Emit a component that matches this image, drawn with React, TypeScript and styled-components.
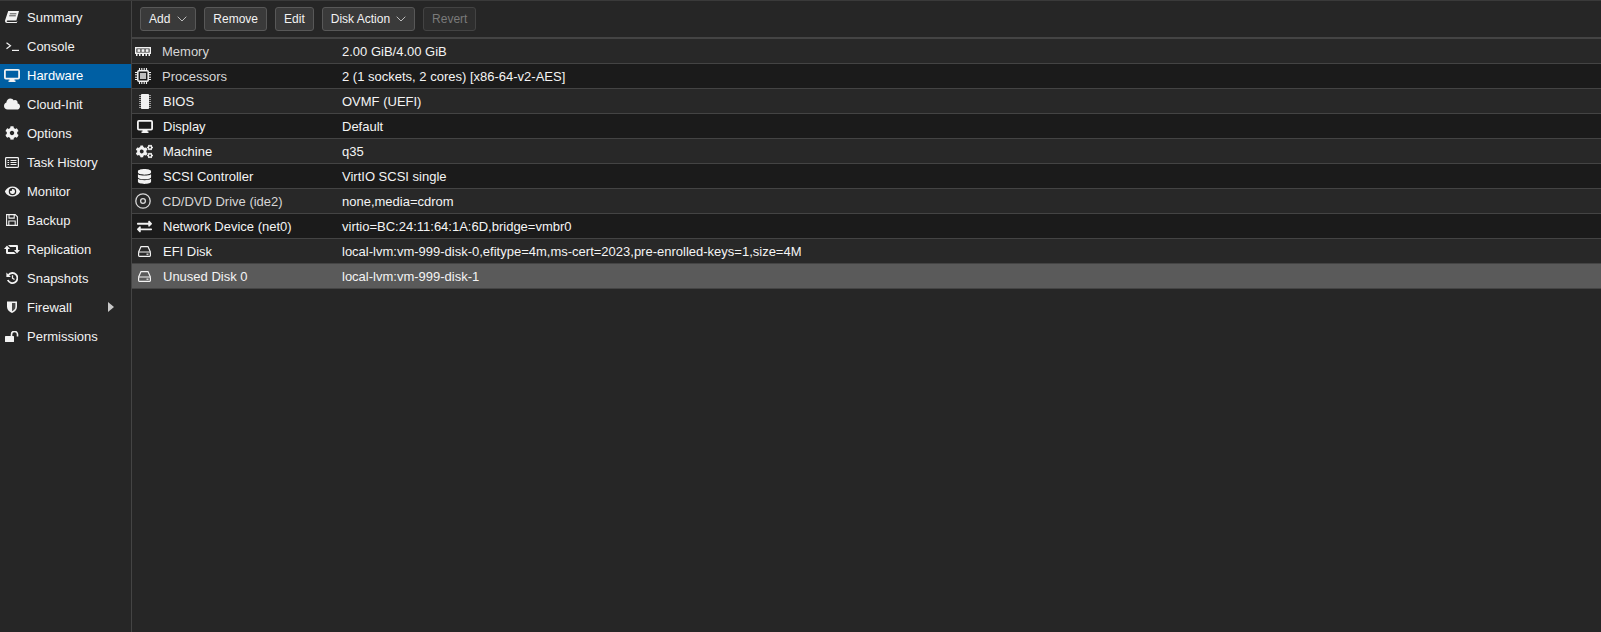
import React from "react";
import styled, { createGlobalStyle } from "styled-components";
import { FaCloud, FaCog, FaCogs, FaDatabase, FaExchangeAlt, FaEye } from "react-icons/fa";

const GlobalStyle = createGlobalStyle`
  html, body {
    margin: 0;
    height: 100%;
    background: #262626;
  }
  #root {
    height: 100%;
  }
`;

const Page = styled.div`
  display: flex;
  height: 632px;
  box-sizing: border-box;
  border-top: 1px solid #3a3a3a;
  background: #262626;
  color: #f2f2f2;
  font-family: "Liberation Sans", Arial, sans-serif;
  font-size: 13px;
  overflow: hidden;
`;

const Sidebar = styled.nav`
  width: 131px;
  flex: none;
  padding-top: 5px;
  border-right: 1px solid #444;
  display: flex;
  flex-direction: column;
  gap: 5px;
`;

const NavItem = styled.div<{ $active?: boolean }>`
  height: 24px;
  box-sizing: border-box;
  padding: 0 0 2px 4px;
  display: flex;
  align-items: center;
  background: ${(p) => (p.$active ? "#005fa3" : "transparent")};
  color: ${(p) => (p.$active ? "#fff" : "#f2f2f2")};
`;

const NavIcon = styled.span`
  width: 16px;
  margin-right: 7px;
  flex: none;
  display: flex;
  align-items: center;
  justify-content: center;
  font-size: 14px;
`;

const NavLabel = styled.span`
  flex: 1;
`;

const NavArrow = styled.span`
  width: 0;
  height: 0;
  margin-right: 17px;
  border-left: 6px solid #c8c8c8;
  border-top: 5px solid transparent;
  border-bottom: 5px solid transparent;
`;

const Main = styled.main`
  flex: 1;
  display: flex;
  flex-direction: column;
  min-width: 0;
`;

const Toolbar = styled.div`
  height: 38px;
  flex: none;
  box-sizing: border-box;
  padding: 6px 0 0 8px;
  display: flex;
  align-items: flex-start;
  gap: 8px;
  border-bottom: 2px solid #444;
`;

const ToolButton = styled.div<{ $disabled?: boolean; $gap?: number }>`
  height: 24px;
  box-sizing: border-box;
  padding: 0 8px;
  display: flex;
  align-items: center;
  gap: ${(p) => p.$gap ?? 6}px;
  border: 1px solid ${(p) => (p.$disabled ? "#434343" : "#585858")};
  border-radius: 3px;
  background: ${(p) => (p.$disabled ? "#2e2e2e" : "#3a3a3a")};
  color: ${(p) => (p.$disabled ? "#7a7a7a" : "#f2f2f2")};
  font-size: 12px;
`;

const Grid = styled.div`
  display: flex;
  flex-direction: column;
`;

const GridRow = styled.div<{ $striped?: boolean; $selected?: boolean }>`
  height: 25px;
  box-sizing: border-box;
  display: grid;
  grid-template-columns: 208px 1fr;
  align-items: center;
  padding-left: 2px;
  border-bottom: 1px solid #444;
  background: ${(p) =>
    p.$selected ? "#5a5a5a" : p.$striped ? "#1b1b1b" : "#282828"};
`;

const RowName = styled.div`
  display: flex;
  align-items: center;
`;

const RowIcon = styled.span<{ $wide?: boolean }>`
  width: ${(p) => (p.$wide ? "21px" : "18px")};
  margin-right: ${(p) => (p.$wide ? "8px" : "10px")};
  flex: none;
  display: flex;
  align-items: center;
  justify-content: center;
  font-size: 15px;
`;

const RowLabel = styled.span<{ $muted?: boolean }>`
  color: ${(p) => (p.$muted ? "#d6d6d6" : "#f4f4f4")};
  white-space: nowrap;
`;

const RowValue = styled.span`
  color: #f4f4f4;
  white-space: nowrap;
`;

// the page uses font awesome 4 shapes, the packages only carry the newer ones
const W = "#f2f2f2";

const PromptIcon = () => (
  <svg width="13" height="9" viewBox="0 0 13 9" fill="none" stroke={W} strokeWidth="1.2">
    <path d="M0.5 .8l4 3-4 3" />
    <path d="M6 8.4h7" />
  </svg>
);

const BookIcon = () => (
  <svg width="14" height="12" viewBox="0 0 14 12">
    <path
      fill={W}
      d="M3.2 0H14l-2.6 9.6H2.6c-1.2 0-1.2 1.3 0 1.3h9l.5-1 .2.3-.5 1.800H2C.4 12-.3 10.600.2 9z"
    />
    <path stroke="#262626" strokeWidth=".8" d="M4.800 2.800h6.600M4.200 4.800h6.600" />
  </svg>
);

const DesktopIcon = ({ width = 16 }: { width?: number }) => (
  <svg width={width} height="13" viewBox="0 0 16 13" fill="none">
    <rect x=".9" y=".9" width="14.200" height="8.700" rx="1" stroke={W} strokeWidth="1.800" />
    <path fill={W} d="M5.500 10h5v1.400h1V13H4.500v-1.600h1z" />
  </svg>
);

const ListIcon = () => (
  <svg width="14" height="11" viewBox="0 0 14 11" fill="none" stroke={W}>
    <rect x=".6" y=".6" width="12.800" height="9.800" rx=".8" strokeWidth="1.200" />
    <path strokeWidth="1.100" d="M2.500 3.500h1.600M5.500 3.500h6M2.500 5.500h1.600M5.500 5.500h6M2.500 7.500h1.600M5.500 7.500h6" />
  </svg>
);

const SaveIcon = () => (
  <svg width="12" height="12" viewBox="0 0 12 12" fill="none" stroke={W} strokeWidth="1.100">
    <path d="M.6.6h8.600l2.200 2.200v8.600H.6z" />
    <path d="M3 .6v3.500h5.200V.6M2.800 11.400V7h6.400v4.400" />
  </svg>
);

const RetweetIcon = () => (
  <svg width="16" height="9" viewBox="0 0 16 9" fill={W}>
    <path d="M0 4l3-3.500L6 4H4v3h6l2 2H3.200C2.500 9 2 8.500 2 7.800V4z" />
    <path d="M16 5l-3 3.500L10 5h2V2H6L4 0h8.800c.7 0 1.200.5 1.200 1.200V5z" />
  </svg>
);

const HistoryIcon = () => (
  <svg width="12" height="12" viewBox="0 0 12 12" fill="none" stroke={W}>
    <path strokeWidth="1.800" d="M2.400 3A5 5 0 1 1 1.800 8" />
    <path fill={W} stroke="none" d="M.4.600v4.500h4.500z" />
    <path strokeWidth="1.300" d="M6.500 3.200v3l2 1.300" />
  </svg>
);

const ShieldIcon = () => (
  <svg width="10" height="12" viewBox="0 0 10 12">
    <path fill={W} d="M0 .6h10v5.400c0 3-2.600 5-5 6-2.400-1-5-3-5-6z" />
    <path fill="#4a4a4a" d="M5 2h3.400v4c0 2-1.700 3.400-3.400 4.300z" />
  </svg>
);

const UnlockIcon = () => (
  <svg width="14" height="11" viewBox="0 0 14 11">
    <rect fill={W} x="0" y="5" width="9" height="6" rx=".6" />
    <path fill="none" stroke={W} strokeWidth="1.600" d="M6.500 5.500V3.400a3 3 0 0 1 6 0V5.500" />
  </svg>
);

const MemoryIcon = () => (
  <svg width="16" height="9" viewBox="0 0 16 9" fill={W}>
    <path fillRule="evenodd" d="M0 0h16v7H0zM1.400 1.400v4.200h13.200V1.400z" />
    <rect x="2.400" y="2.200" width="3" height="2.700" />
    <rect x="6.500" y="2.200" width="3" height="2.700" />
    <rect x="10.600" y="2.200" width="3" height="2.700" />
    <path d="M1 7h1.500v2H1zM4 7h1.500v2H4zM7 7h2v2H7zM10.500 7H12v2h-1.500zM13.500 7H15v2h-1.500z" />
  </svg>
);

const CpuIcon = () => (
  <svg width="16" height="16" viewBox="0 0 16 16">
    <rect x="2.800" y="2.800" width="10.400" height="10.400" rx="1" fill="#1b1b1b" stroke={W} strokeWidth="1.500" />
    <rect x="5" y="5" width="6" height="6" fill="#bdbdbd" />
    <path
      stroke={W}
      strokeWidth="1.100"
      d="M0 4.500h2M0 6.800h2M0 9.200h2M0 11.500h2M14 4.500h2M14 6.800h2M14 9.200h2M14 11.500h2M4.500 0v2M6.800 0v2M9.200 0v2M11.500 0v2M4.500 14v2M6.800 14v2M9.200 14v2M11.500 14v2"
    />
  </svg>
);

const BiosIcon = () => (
  <svg width="12" height="15" viewBox="0 0 12 15">
    <rect x="2" y="0" width="8" height="15" rx=".8" fill={W} />
    <path
      stroke="#9a9a9a"
      strokeWidth="1"
      d="M0 1.500h2M0 3.500h2M0 5.500h2M0 7.500h2M0 9.500h2M0 11.500h2M0 13.500h2M10 1.500h2M10 3.500h2M10 5.500h2M10 7.500h2M10 9.500h2M10 11.500h2M10 13.500h2"
    />
  </svg>
);

const DiscIcon = () => (
  <svg width="16" height="16" viewBox="0 0 16 16" fill="none" stroke="#d8d8d8">
    <circle cx="8" cy="8" r="7.200" strokeWidth="1.300" />
    <circle cx="8" cy="8" r="2.400" strokeWidth="1.300" />
  </svg>
);

const DiskIcon = () => (
  <svg width="13" height="11" viewBox="0 0 13 11" fill="none" stroke={W} strokeWidth="1.200">
    <path d="M.6 6L3 .6h7L12.400 6" />
    <rect x=".6" y="6" width="11.800" height="4.400" rx=".8" />
    <path d="M8.500 8.200h2" />
  </svg>
);

const Chevron = () => (
  <svg width="10" height="6" viewBox="0 0 10 6" fill="none" stroke="#bdbdbd" strokeWidth="1">
    <path d="M.7.700L5 5l4.300-4.300" />
  </svg>
);

const navItems = [
  { label: "Summary", icon: <BookIcon /> },
  { label: "Console", icon: <PromptIcon /> },
  { label: "Hardware", icon: <DesktopIcon />, active: true },
  { label: "Cloud-Init", icon: <FaCloud size={16} /> },
  { label: "Options", icon: <FaCog size={14} /> },
  { label: "Task History", icon: <ListIcon /> },
  { label: "Monitor", icon: <FaEye size={15} /> },
  { label: "Backup", icon: <SaveIcon /> },
  { label: "Replication", icon: <RetweetIcon /> },
  { label: "Snapshots", icon: <HistoryIcon /> },
  { label: "Firewall", icon: <ShieldIcon />, arrow: true },
  { label: "Permissions", icon: <UnlockIcon /> },
];

const rows = [
  { label: "Memory", value: "2.00 GiB/4.00 GiB", icon: <MemoryIcon />, muted: true },
  { label: "Processors", value: "2 (1 sockets, 2 cores) [x86-64-v2-AES]", icon: <CpuIcon />, muted: true },
  { label: "BIOS", value: "OVMF (UEFI)", icon: <BiosIcon /> },
  { label: "Display", value: "Default", icon: <DesktopIcon /> },
  { label: "Machine", value: "q35", icon: <FaCogs size={17} /> },
  { label: "SCSI Controller", value: "VirtIO SCSI single", icon: <FaDatabase size={15} /> },
  { label: "CD/DVD Drive (ide2)", value: "none,media=cdrom", icon: <DiscIcon />, muted: true },
  { label: "Network Device (net0)", value: "virtio=BC:24:11:64:1A:6D,bridge=vmbr0", icon: <FaExchangeAlt /> },
  { label: "EFI Disk", value: "local-lvm:vm-999-disk-0,efitype=4m,ms-cert=2023,pre-enrolled-keys=1,size=4M", icon: <DiskIcon /> },
  { label: "Unused Disk 0", value: "local-lvm:vm-999-disk-1", icon: <DiskIcon />, selected: true },
];

export default function App() {
  return (
    <>
      <GlobalStyle />
      <Page>
        <Sidebar>
          {navItems.map((item) => (
            <NavItem key={item.label} $active={item.active}>
              <NavIcon>{item.icon}</NavIcon>
              <NavLabel>{item.label}</NavLabel>
              {item.arrow && <NavArrow />}
            </NavItem>
          ))}
        </Sidebar>
        <Main>
          <Toolbar>
            <ToolButton $gap={7}>
              Add <Chevron />
            </ToolButton>
            <ToolButton>Remove</ToolButton>
            <ToolButton>Edit</ToolButton>
            <ToolButton>
              Disk Action <Chevron />
            </ToolButton>
            <ToolButton $disabled>Revert</ToolButton>
          </Toolbar>
          <Grid>
            {rows.map((row, i) => (
              <GridRow key={row.label} $striped={i % 2 === 1} $selected={row.selected}>
                <RowName>
                  <RowIcon $wide={!row.muted}>{row.icon}</RowIcon>
                  <RowLabel $muted={row.muted}>{row.label}</RowLabel>
                </RowName>
                <RowValue>{row.value}</RowValue>
              </GridRow>
            ))}
          </Grid>
        </Main>
      </Page>
    </>
  );
}
